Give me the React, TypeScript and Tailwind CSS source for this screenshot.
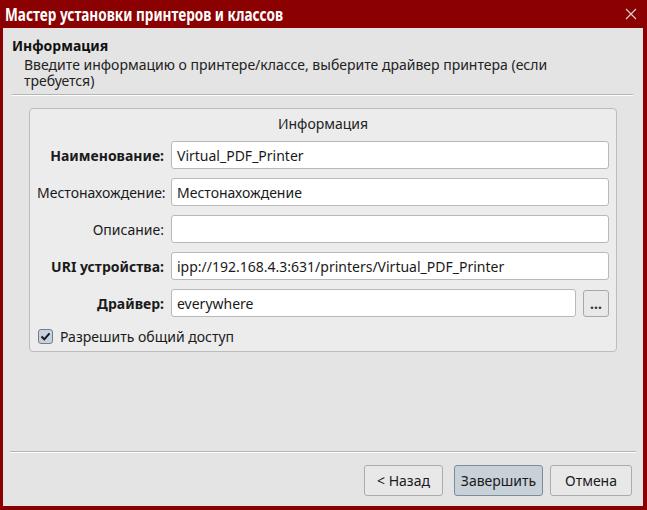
import React from "react";

const font = { fontFamily: '"Noto Sans", "DejaVu Sans", sans-serif' };

function Row({ label, bold, value, extra }: { label: string; bold?: boolean; value: string; extra?: boolean }) {
  return (
    <div className="flex items-center h-[28px]">
      <div className={`w-[134px] shrink-0 text-right pr-[7px] text-[14px] text-[#1a1a1a] whitespace-nowrap ${bold ? "font-bold" : ""}`}>{label}</div>
      <div className="flex-1 h-[28px] bg-white border border-[#b9b9b9] rounded-[3px] flex items-center px-[5px] text-[14px] text-[#1a1a1a] whitespace-nowrap overflow-hidden">
        {value}
      </div>
      {extra && (
        <div className="ml-[7px] w-[26px] h-[27px] border border-[#a8a8a8] rounded-[3px] bg-[#e8e8e8] flex items-center justify-center text-[14px] font-bold text-[#333] leading-none pt-[2px]">
          ...
        </div>
      )}
    </div>
  );
}

export default function App() {
  return (
    <div style={font} className="w-[647px] h-[510px] bg-[#8b0000] flex flex-col">
      <div className="h-[28px] flex items-center justify-between pl-[5px] pr-[9px]">
        <div className="text-white font-bold text-[17px] leading-none whitespace-nowrap origin-left scale-x-[0.8]">Мастер установки принтеров и классов</div>
        <svg width="12" height="12" viewBox="0 0 12 12" className="mr-[1px]">
          <path d="M1 1 L11 11 M11 1 L1 11" stroke="#e0d0d0" strokeWidth="1.2" />
        </svg>
      </div>
      <div className="flex-1 ml-[3px] mr-[4px] mb-[4px] bg-[#e4e4e4] flex flex-col">
        <div className="pl-[9px] pt-[9px] pr-[10px]">
          <div className="font-bold text-[14px] text-[#111] leading-[18px]">Информация</div>
          <div className="pl-[12px] text-[14px] text-[#222] leading-[16px] mt-[2px] pr-[40px]">
            Введите информацию о принтере/классе, выберите драйвер принтера (если требуется)
          </div>
          <div className="mt-[5px] h-[2px] border-t border-[#b4b4b4] border-b-white border-b" />
        </div>
        <div className="mx-[26px] mt-[12px] h-[244px] border border-[#bcbcbc] rounded-[4px] bg-[#ececec] px-[7px]">
          <div className="text-center text-[14px] text-[#222] mt-[6px] leading-[18px]">Информация</div>
          <div className="mt-[8px] flex flex-col gap-[9px]">
            <Row label="Наименование:" bold value="Virtual_PDF_Printer" />
            <Row label="Местонахождение:" value="Местонахождение" />
            <Row label="Описание:" value="" />
            <Row label="URI устройства:" bold value="ipp://192.168.4.3:631/printers/Virtual_PDF_Printer" />
            <Row label="Драйвер:" bold value="everywhere" extra />
          </div>
          <div className="flex items-center mt-[9px] pl-[1px]">
            <div className="w-[15px] h-[15px] border border-[#6f7f8f] rounded-[3px] bg-[#c8d2dc] flex items-center justify-center">
              <svg width="11" height="11" viewBox="0 0 11 11">
                <path d="M1.5 5.5 L4.3 8.3 L9.5 2.3" stroke="#1a1a1a" strokeWidth="2" fill="none" />
              </svg>
            </div>
            <div className="ml-[7px] text-[14px] text-[#1a1a1a]">Разрешить общий доступ</div>
          </div>
        </div>
        <div className="flex-1" />
        <div className="mx-[7px] h-[2px] border-t border-[#b4b4b4] border-b border-b-white" />
        <div className="flex justify-end gap-[8px] pr-[11px] pt-[12px] pb-[10px]">
          <div className="w-[79px] h-[31px] border border-[#ababab] rounded-[3px] bg-[#e8e8e8] flex items-center justify-center text-[14px] text-[#1a1a1a]">&lt; Назад</div>
          <div className="w-[89px] h-[31px] border border-[#7d8c9a] rounded-[3px] bg-[#c8d0d8] flex items-center justify-center text-[14px] text-[#1a1a1a] -mr-[1px] ml-[3px]">Завершить</div>
          <div className="w-[82px] h-[31px] border border-[#ababab] rounded-[3px] bg-[#e8e8e8] flex items-center justify-center text-[14px] text-[#1a1a1a]">Отмена</div>
        </div>
      </div>
    </div>
  );
}
